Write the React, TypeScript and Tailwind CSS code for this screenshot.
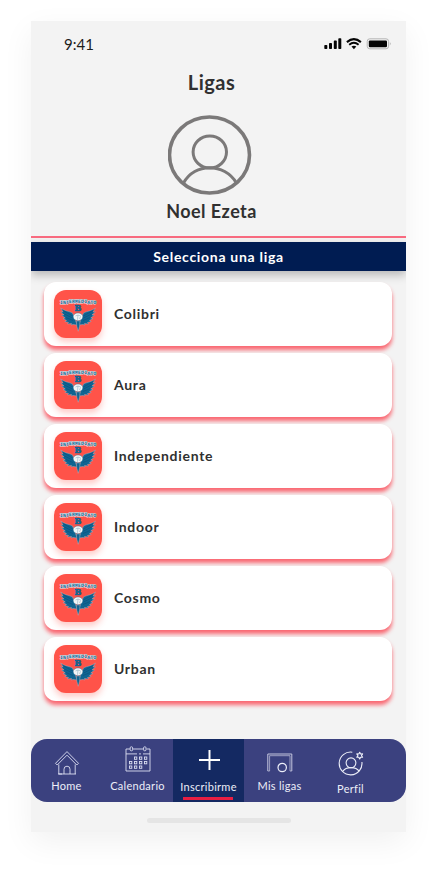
import type { ReactNode } from "react";

const leagues = ["Colibri", "Aura", "Independiente", "Indoor", "Cosmo", "Urban"];

function StatusIcons() {
  return (
    <svg width="68" height="12" viewBox="0 0 68 12" role="img" aria-label="Señal, wifi y batería">
      <g fill="#050505">
        <rect x="0.3" y="7" width="3" height="4" rx="0.8" />
        <rect x="5" y="5" width="3" height="6" rx="0.8" />
        <rect x="9.8" y="2.6" width="3" height="8.4" rx="0.8" />
        <rect x="14.3" y="0.2" width="3" height="10.8" rx="0.8" />
      </g>
      <path d="M22.9 4.1 Q29.9 -1.7 36.9 4.1" fill="none" stroke="#050505" strokeWidth="2.1" />
      <path d="M25.2 6.7 Q29.9 2.9 34.6 6.7" fill="none" stroke="#050505" strokeWidth="1.9" />
      <path d="M27.5 8.600 Q29.900 6.800 32.300 8.600 L29.900 11.200 Z" fill="#050505" />
      <rect x="43.2" y="0.8" width="21.4" height="10" rx="2.6" fill="none" stroke="#b5b5b5" />
      <rect x="44.8" y="2.4" width="18.2" height="6.8" rx="1.2" fill="#050505" />
      <path d="M65.9 4 Q67.6 5.8 65.9 7.6 Z" fill="#aaa" />
    </svg>
  );
}

function Avatar() {
  return (
    <svg width="88" height="80" viewBox="0 0 88 80" fill="none" stroke="#7b7979" aria-hidden="true">
      <ellipse cx="41.500" cy="40" rx="40" ry="38" strokeWidth="3.6" />
      <ellipse cx="41.800" cy="37" rx="16.7" ry="16" strokeWidth="3" />
      <path d="M15.500 68 C26.500 47.500 56.500 47.500 68.500 68" strokeWidth="3" />
    </svg>
  );
}

function TeamLogo() {
  return (
    <svg width="48" height="48" viewBox="0 0 48 48" className="tracking-normal" aria-hidden="true">
      <g stroke="#b9bcc8" strokeWidth="0.4" fill="#0f6592" strokeLinejoin="round">
        <path d="M6.700 18 C10 21 15 21 18.500 23 L21 29 L23.200 35 L19 34.500 L17 35 L17.500 33.500 L13.500 34 L14.500 32.500 L10.800 31.500 L12.500 30.500 L9 28.500 L11.200 28 L7.500 25 L10 25 L6.700 21.800 L9 22 Z" />
        <path d="M41.500 18 C38 21 33 21 29.500 23 L27 29 L24.800 35 L29 34.500 L31 35 L30.500 33.500 L34.500 34 L33.500 32.500 L37.200 31.500 L35.500 30.500 L39 28.500 L36.800 28 L40.500 25 L38 25 L41.500 21.800 L39 22 Z" />
        <path d="M22.300 31 H26 L25.600 36 L24.200 41.300 L22.800 36 Z" />
      </g>
      <path d="M9 20.500 L18.500 26 M10.500 24 L18.500 28 M12 27.600 L19 30.500 M39 20.500 L29.500 26 M37.500 24 L29.500 28 M36 27.600 L29 30.500" stroke="#0a4a78" strokeWidth="0.5" />
      <ellipse cx="24" cy="26.800" rx="4.800" ry="3.900" fill="#f4f6f7" stroke="#14608a" strokeWidth="0.4" />
      <path d="M21.500 26 L24 25 L26.700 26 M24 25 L23.500 29.800 M26.500 26.500 L25.600 29" stroke="#7ba3b7" strokeWidth="0.5" fill="none" />
      <text
        x="24"
        y="20.800"
        textAnchor="middle"
        textRendering="geometricPrecision"
        className="font-['DejaVu_Serif',serif] text-[8px] font-bold"
        fill="#0f6592"
        stroke="#0f6592"
        strokeWidth="0.7"
      >
        B
      </text>
      <text
        x="6"
        y="14.200 13.900 13.600 13.400 13.200 13.100 13.100 13.200 13.400 13.600 13.900 14.200"
        textRendering="geometricPrecision"
        className="font-['Liberation_Mono',monospace] text-[5px] font-bold"
        fill="#0f6592"
        stroke="#dfe9ee"
        strokeWidth="0.9"
        paintOrder="stroke"
      >
        INTERMEDIATO
      </text>
    </svg>
  );
}

function HomeIcon() {
  return (
    <svg width="26" height="26" viewBox="0 0 26 26" fill="none" stroke="#dcdff2" strokeWidth="0.9" strokeLinejoin="round" aria-hidden="true">
      <path d="M1.500 13.300 L13 1.600 L24.500 13.300 L22.800 15 L13 5.200 L3.200 15 Z" />
      <path d="M4.800 14.500 V24 H8 M4 24 H22 M21.200 14.500 V24" />
      <path d="M10 24 V19.200 A3 3 0 0 1 16 19.200 V24" />
    </svg>
  );
}

function CalendarIcon() {
  const days = [
    [9.5, 11], [14.5, 11], [19.5, 11],
    [4.5, 15.5], [9.5, 15.5], [14.5, 15.5], [19.5, 15.5],
    [4.5, 20], [9.5, 20], [14.5, 20],
  ];
  return (
    <svg width="26" height="26" viewBox="0 0 26 26" fill="none" stroke="#dcdff2" strokeWidth="0.9" aria-hidden="true">
      <path d="M5 3 H1 V25 H25 V3 H21.500 M8 3 H18.500 M1 7.900 H12 M14 7.900 H16 M18 7.900 H25" />
      <rect x="5.200" y="0.800" width="2.400" height="4" rx="1" />
      <rect x="18.600" y="0.800" width="2.400" height="4" rx="1" />
      {days.map(([x, y]) => (
        <rect key={`${x}-${y}`} x={x} y={y} width="2.300" height="2.300" />
      ))}
    </svg>
  );
}

function PlusIcon() {
  return (
    <svg width="26" height="26" viewBox="0 0 26 26" stroke="#fff" strokeWidth="2" aria-hidden="true">
      <path d="M13.500 3 V23 M3 13 H24" />
    </svg>
  );
}

function GoalIcon() {
  return (
    <svg width="26" height="26" viewBox="0 0 26 26" fill="none" stroke="#c5c7de" aria-hidden="true">
      <path d="M0.800 21 V4 H24.800 V21" strokeWidth="1" />
      <path d="M2.600 21 V5.700 H23 V21" strokeWidth="0.700" />
      <path d="M0.800 21 H2.600 M23 21 H24.800" strokeWidth="0.800" />
      <circle cx="15.200" cy="17.500" r="4.200" stroke="#eceef8" strokeWidth="1.200" />
    </svg>
  );
}

function ProfileIcon() {
  return (
    <svg width="26" height="26" viewBox="0 0 26 26" fill="none" stroke="#eceef8" strokeWidth="1.100" aria-hidden="true">
      <path d="M14.300 1.200 A11.400 11.400 0 1 0 23.900 11" />
      <circle cx="13" cy="11.800" r="4.900" />
      <path d="M4.800 20.200 C8 15.400 18 15.400 21.200 20.200" />
      <path
        d="M21.700 1.200 L22.600 3 L24.600 2.900 L23.500 4.600 L24.600 6.300 L22.600 6.200 L21.700 8 L20.800 6.200 L18.800 6.300 L19.900 4.600 L18.800 2.900 L20.800 3 Z"
        strokeLinejoin="round"
      />
    </svg>
  );
}

type Tab = { label: string; icon: ReactNode; active?: boolean; className: string };

const tabs: Tab[] = [
  { label: "Home", icon: <HomeIcon />, className: "pt-[11px]" },
  { label: "Calendario", icon: <CalendarIcon />, className: "gap-1 pt-[7px]" },
  { label: "Inscribirme", icon: <PlusIcon />, active: true, className: "gap-1 pt-2" },
  { label: "Mis ligas", icon: <GoalIcon />, className: "pt-[11px]" },
  { label: "Perfil", icon: <ProfileIcon />, className: "gap-0.5 pt-3" },
];

export default function App() {
  return (
    <div className="min-h-screen bg-white pt-[21px] pr-[30px] pb-[41px] pl-[31px] font-[Lato,sans-serif] text-[#303030]">
      <div className="flex flex-col overflow-hidden bg-[#f3f3f3] shadow-[0_10px_30px_rgba(0,0,0,0.06)]">
        <div className="flex items-center justify-between pt-[11px] pr-3.5 pl-[33px]">
          <span className="text-[15px] leading-6 text-[#1c1c1c]">9:41</span>
          <StatusIcons />
        </div>

        <header className="flex flex-col items-center border-b-2 border-[#f96b80] pt-3 pr-3.5 pb-[13px]">
          <h1 className="text-xl leading-7 font-bold tracking-wide">Ligas</h1>
          <div className="mt-[19px]">
            <Avatar />
          </div>
          <p className="mt-1 text-lg leading-6 font-bold tracking-wide">Noel Ezeta</p>
        </header>

        <h2 className="mt-1 bg-[#001c52] text-center text-sm leading-[29px] font-bold tracking-wider text-white shadow-[0_4px_10px_rgba(0,0,0,0.25)]">
          Selecciona una liga
        </h2>

        <ul className="flex flex-col gap-[7px] pt-[11px] pr-3.5 pb-[38px] pl-[13px]">
          {leagues.map((name) => (
            <li key={name}>
              <button
                type="button"
                className="flex h-16 w-full items-center gap-3 rounded-xl bg-white px-2.5 text-left text-sm font-bold tracking-wider shadow-[0_4px_4px_#fa6670]"
              >
                <span className="size-12 rounded-xl bg-[#ff5349] shadow-[0_4px_6px_rgba(255,83,73,0.3)]">
                  <TeamLogo />
                </span>
                {name}
              </button>
            </li>
          ))}
        </ul>

        <nav className="flex h-[63px] overflow-hidden rounded-2xl bg-[#3b417f] pr-5">
          {tabs.map((tab) => (
            <a
              key={tab.label}
              href="#"
              aria-current={tab.active ? "page" : undefined}
              className={`flex flex-1 flex-col items-center text-[11px] leading-5 tracking-wide text-[#eceef8] ${tab.active ? "bg-[#142962]" : ""} ${tab.className}`}
            >
              {tab.icon}
              <span className="flex flex-col items-center">
                {tab.label}
                {tab.active && <span className="h-[3px] w-[50px] bg-[#e91e42]" />}
              </span>
            </a>
          ))}
        </nav>

        <div className="flex justify-center pt-4 pb-[9px]">
          <div className="h-[5px] w-36 rounded-full bg-[#e5e5e5]" />
        </div>
      </div>
    </div>
  );
}
